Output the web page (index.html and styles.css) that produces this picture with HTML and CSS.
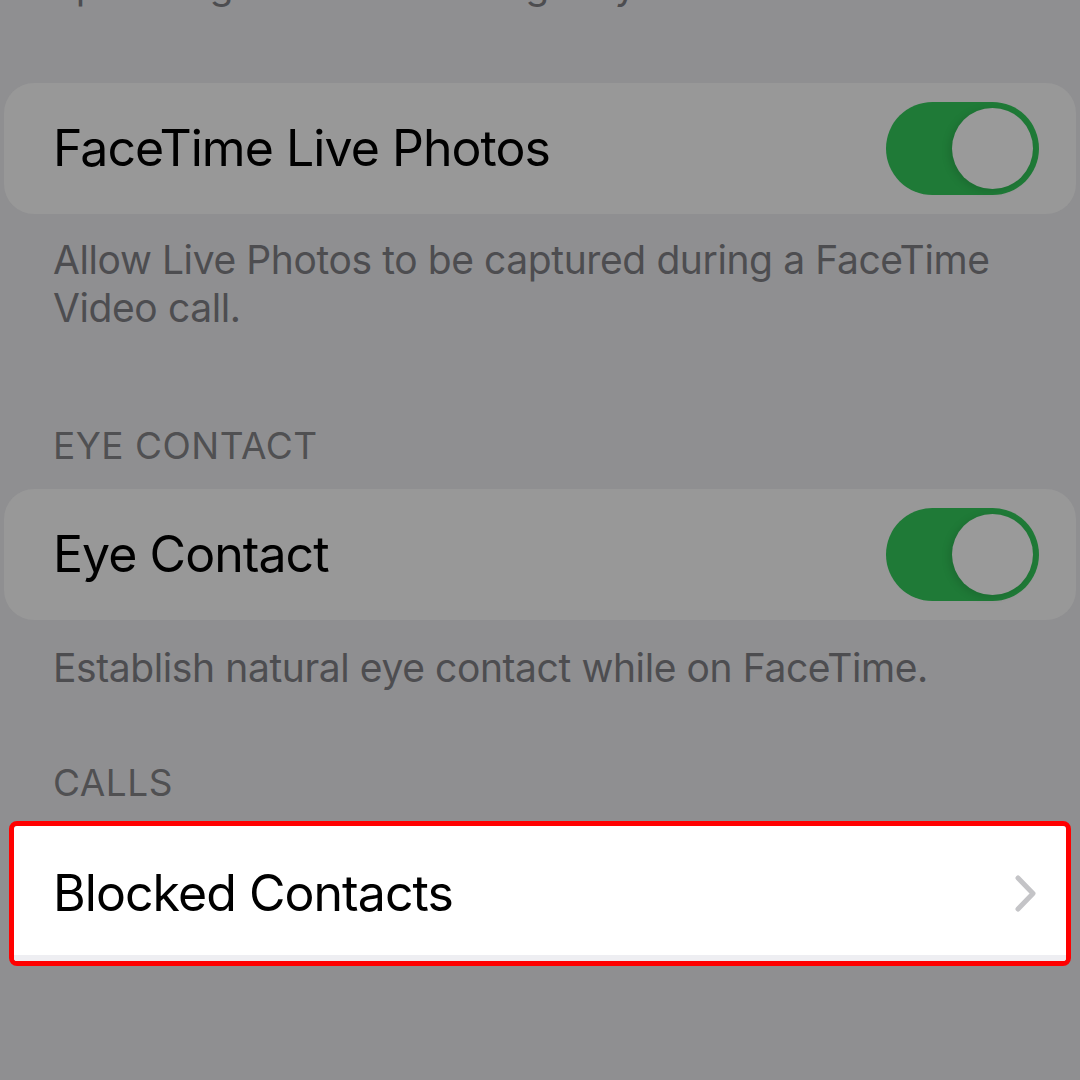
FILE: index.html
```html
<!DOCTYPE html>
<html lang="en">
<head>
<meta charset="utf-8">
<title>FaceTime Settings</title>
<link rel="stylesheet" href="styles.css">
</head>
<body>
<div class="page">
  <p class="note note-top">upcoming calls in an emergency situation.</p>

  <div class="card card-first">
    <span class="label">FaceTime Live Photos</span>
    <span class="toggle"><span class="knob"></span></span>
  </div>
  <p class="note note-first">Allow Live Photos to be captured during a FaceTime Video call.</p>

  <h2 class="section section-eye">EYE CONTACT</h2>
  <div class="card card-eye">
    <span class="label">Eye Contact</span>
    <span class="toggle"><span class="knob"></span></span>
  </div>
  <p class="note note-eye">Establish natural eye contact while on FaceTime.</p>

  <h2 class="section section-calls">CALLS</h2>
  <div class="highlight">
    <div class="row-white">
      <span class="label">Blocked Contacts</span>
      <svg class="chevron" width="24" height="40" viewBox="0 0 24 40" aria-hidden="true">
        <polyline points="4,4 19,19.5 4,35" fill="none" stroke="#c4c4c7" stroke-width="5" stroke-linecap="round" stroke-linejoin="round"/>
      </svg>
    </div>
  </div>
</div>
</body>
</html>
```

FILE: styles.css
```css
html, body {
  margin: 0;
  padding: 0;
  background: #8f8f91;
  overflow: hidden;
}

body {
  width: 1080px;
  height: 1080px;
  font-family: Inter, "Noto Sans", "Liberation Sans", sans-serif;
  color: #000;
}

.page {
  display: flex;
  flex-direction: column;
}

.note {
  margin: 0;
  padding: 0 40px 0 53px;
  font-size: 39px;
  line-height: 48px;
  letter-spacing: -0.4px;
  color: #4d4d50;
}

.note-top {
  margin-top: -39px;
  white-space: nowrap;
}

.note-first {
  margin-top: 22px;
}

.note-eye {
  margin-top: 24px;
}

.card {
  margin: 0 4px;
  height: 131px;
  border-radius: 30px;
  background: #989898;
  display: flex;
  align-items: center;
  justify-content: space-between;
  padding: 0 37px 0 49px;
}

.card-first {
  margin-top: 74px;
}

.card-eye {
  margin-top: 19px;
}

.label {
  font-size: 50px;
  line-height: 1.21;
  letter-spacing: -0.95px;
  color: #000;
}

.toggle {
  position: relative;
  width: 153px;
  height: 93px;
  border-radius: 47px;
  background: #1f7a37;
  flex: none;
}

.knob {
  position: absolute;
  top: 6px;
  right: 6px;
  width: 81px;
  height: 81px;
  border-radius: 50%;
  background: #9a9a9a;
  box-shadow: -3px 2px 8px rgba(0, 0, 0, 0.12);
}

.section {
  margin: 0;
  padding: 0 53px;
  font-size: 37px;
  font-weight: 400;
  line-height: 48px;
  letter-spacing: 0.5px;
  color: #505052;
}

.section-eye {
  margin-top: 90px;
}

.section-calls {
  margin-top: 67px;
}

.highlight {
  margin: 14px 9px 0;
  border: 5px solid #ff0000;
  border-radius: 8px;
  overflow: hidden;
}

.row-white {
  height: 135px;
  background: #ffffff;
  box-shadow: inset 0 -6px 0 #eeeef2;
  display: flex;
  align-items: center;
  justify-content: space-between;
  padding: 0 28px 0 39px;
}

.chevron {
  display: block;
  flex: none;
}
```
